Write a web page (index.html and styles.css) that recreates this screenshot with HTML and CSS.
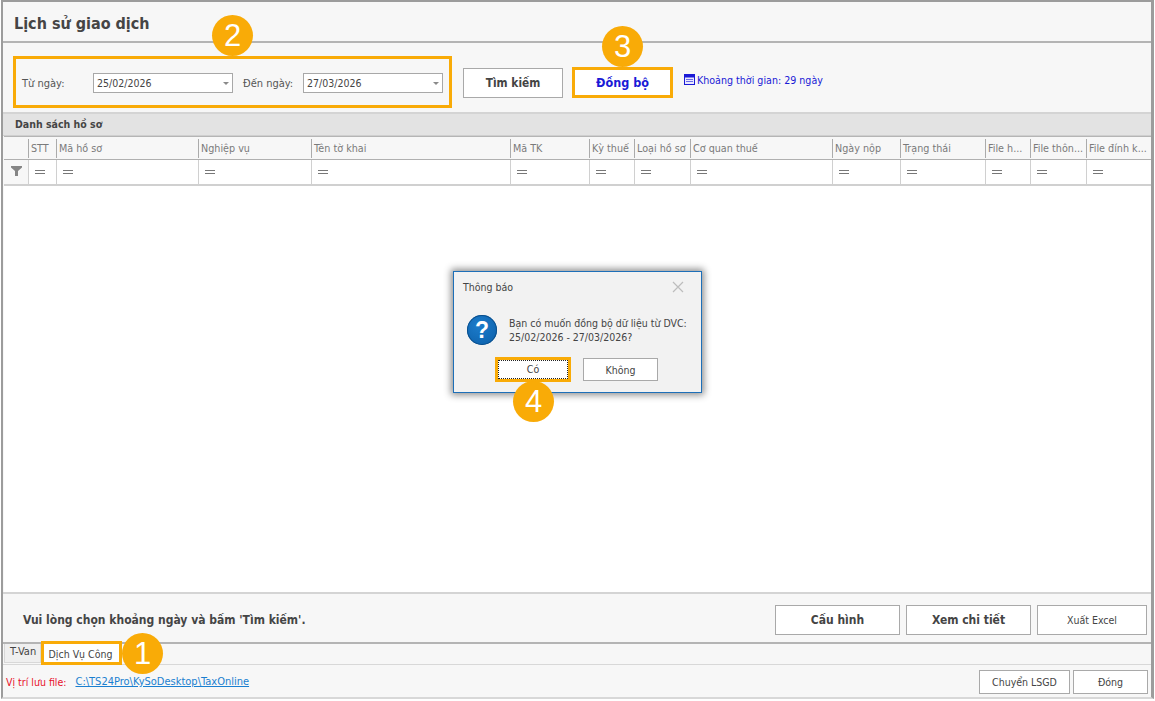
FILE: index.html
```html
<!DOCTYPE html>
<html lang="vi">
<head>
<meta charset="utf-8">
<title>Lịch sử giao dịch</title>
<link rel="stylesheet" href="styles.css">
</head>
<body>
<div class="window">
  <header class="title-bar"><h1 class="title">Lịch sử giao dịch</h1></header>
  <section class="toolbar">
    <div class="date-group">
      <label class="lbl lbl-from">Từ ngày:</label>
      <div class="date-input"><span>25/02/2026</span><i class="caret"></i></div>
      <label class="lbl lbl-to">Đến ngày:</label>
      <div class="date-input"><span>27/03/2026</span><i class="caret"></i></div>
    </div>
    <button class="btn btn-search">Tìm kiếm</button>
    <button class="btn btn-sync">Đồng bộ</button>
    <div class="range">
      <svg class="range-icon" width="11" height="11" viewBox="0 0 11 11"><rect x="0.5" y="0.5" width="10" height="10" fill="#e8e8ff" stroke="#1a1ad6"/><rect x="1" y="1" width="9" height="2.5" fill="#1a1ad6"/><path d="M2 5.5h7M2 7.5h7" stroke="#6a6ae8"/></svg>
      <span>Khoảng thời gian: 29 ngày</span>
    </div>
  </section>
  <div class="group-head">Danh sách hồ sơ</div>
  <div class="grid grid-head">
    <div class="hc hc-first"></div>
    <div class="hc">STT</div><div class="hc">Mã hồ sơ</div><div class="hc">Nghiệp vụ</div><div class="hc">Tên tờ khai</div>
    <div class="hc">Mã TK</div><div class="hc">Kỳ thuế</div><div class="hc">Loại hồ sơ</div><div class="hc">Cơ quan thuế</div>
    <div class="hc">Ngày nộp</div><div class="hc">Trạng thái</div><div class="hc">File h...</div><div class="hc">File thôn...</div><div class="hc">File đính k...</div>
  </div>
  <div class="grid grid-filter">
    <div class="fc fc-first"><svg width="11" height="10" viewBox="0 0 11 10"><path d="M0 0h11v1.6L7 5v5H4V5L0 1.6z" fill="#858585"/></svg></div>
    <div class="fc"><i class="eq"></i></div><div class="fc"><i class="eq"></i></div><div class="fc"><i class="eq"></i></div><div class="fc"><i class="eq"></i></div>
    <div class="fc"><i class="eq"></i></div><div class="fc"><i class="eq"></i></div><div class="fc"><i class="eq"></i></div><div class="fc"><i class="eq"></i></div>
    <div class="fc"><i class="eq"></i></div><div class="fc"><i class="eq"></i></div><div class="fc"><i class="eq"></i></div><div class="fc"><i class="eq"></i></div><div class="fc"><i class="eq"></i></div>
  </div>
  <div class="grid-body"></div>
  <section class="action-bar">
    <p class="hint">Vui lòng chọn khoảng ngày và bấm 'Tìm kiếm'.</p>
    <button class="btn btn-action btn-config">Cấu hình</button>
    <button class="btn btn-action btn-detail">Xem chi tiết</button>
    <button class="btn btn-excel">Xuất Excel</button>
  </section>
  <nav class="tabs">
    <div class="tab">T-Van</div>
    <div class="tab tab-active">Dịch Vụ Công</div>
  </nav>
  <footer class="footer">
    <span class="path-label">Vị trí lưu file:</span>
    <a class="path-link" href="#">C:\TS24Pro\KySoDesktop\TaxOnline</a>
    <button class="btn btn-foot btn-lsgd">Chuyển LSGD</button>
    <button class="btn btn-foot btn-close">Đóng</button>
  </footer>

  <div class="dialog">
    <div class="dlg-head"><span>Thông báo</span>
      <svg class="dlg-x" width="12" height="12" viewBox="0 0 12 12"><path d="M1 1l10 10M11 1L1 11" stroke="#bdbdbd" stroke-width="1.2" fill="none"/></svg>
    </div>
    <div class="dlg-body">
      <div class="q-icon">?</div>
      <p class="dlg-msg">Bạn có muốn đồng bộ dữ liệu từ DVC:<br>25/02/2026 - 27/03/2026?</p>
    </div>
    <div class="dlg-btns">
      <button class="dlg-btn dlg-yes"><span>Có</span></button>
      <button class="dlg-btn dlg-no">Không</button>
    </div>
  </div>

  <div class="mark mark-tab"></div>
  <div class="badge badge-1">1</div>
  <div class="badge badge-2">2</div>
  <div class="badge badge-3">3</div>
  <div class="badge badge-4">4</div>
</div>
</body>
</html>
```
FILE: styles.css
```css
* { box-sizing: border-box; }
html, body { margin: 0; padding: 0; background: #fff; }
body { width: 1155px; height: 701px; overflow: hidden; font-family: "DejaVu Sans Condensed", "DejaVu Sans", sans-serif; font-size: 10.5px; color: #444; }
.window { position: relative; margin-left: 1px; width: 1153px; height: 699px; border: solid #9c9c9c; border-width: 2px 3px 0 2px; display: flex; flex-direction: column; background: #f7f7f7; border-bottom: 2px solid #d8d8d8; }
button { font-family: inherit; padding: 0; margin: 0; cursor: default; }

.title-bar { height: 41px; flex: none; border-bottom: 2px solid #b4b4b4; display: flex; align-items: center; padding-left: 11px; }
.title { margin: 0; font-size: 16px; font-weight: 700; color: #454545; position: relative; top: 2px; }

.toolbar { height: 71px; flex: none; display: flex; align-items: center; padding: 8px 0 0 10px; border-bottom: 2px solid #d4d4d4; }
.date-group { width: 439px; height: 52px; border: 3px solid #f9ab07; display: flex; align-items: center; padding: 2px 0 0 6px; margin-top: 1px; }
.lbl { color: #555; font-size: 11px; }
.lbl-from { width: 71px; }
.lbl-to { width: 60px; margin-left: 10px; }
.date-input { width: 140px; height: 20px; border: 1px solid #a8a8a8; background: #fff; display: flex; align-items: center; padding-left: 3px; position: relative; color: #444; }
.caret { position: absolute; right: 3px; top: 8px; width: 0; height: 0; border: 3.5px solid transparent; border-top: 3px solid #8a8a8a; border-bottom: 0; }

.btn { background: #fff; border: 1px solid #a9a9a9; color: #444; }
.btn-search { width: 100px; height: 30px; margin: 3px 0 0 11px; font-size: 11.8px; font-weight: 700; }
.btn-sync { width: 101px; height: 31px; margin: 2px 0 0 9px; border: 3px solid #f9ab07; font-size: 12.5px; font-weight: 700; color: #1a1ad6; }
.range { display: flex; align-items: center; gap: 2px; margin: -4px 0 0 11px; color: #1a1ad6; font-size: 10.6px; }
.range-icon { flex: none; }

.group-head { height: 22px; flex: none; background: #e3e3e3; border-bottom: 1px solid #cfcfcf; padding: 0 0 2px 12px; font-weight: 700; font-size: 10.5px; color: #454545; display: flex; align-items: center; }

.grid { display: grid; grid-template-columns: 24px 28px 142px 113px 199px 79px 45px 56px 142px 68px 85px 45px 56px 64px; flex: none; background: #f7f7f7; margin-left: 1px; }
.grid-head { height: 24px; border-top: 1px solid #b5b5b5; border-bottom: 1px solid #b0b0b0; }
.hc { color: #7a7a7a; font-size: 10.7px; white-space: nowrap; overflow: hidden; padding: 2px 0 0 2px; border-left: 1px solid #ababab; margin: 2px 0 1px; line-height: 16px; }
.hc-first { border-left: 0; }
.grid-filter { height: 26px; background: #fff; border-bottom: 2px solid #d0d0d0; }
.fc { border-left: 1px solid #d0d0d0; display: flex; align-items: center; padding-left: 6px; }
.fc-first { border-left: 0; padding: 0 0 2px 7px; background: #f7f7f7; }
.eq { display: block; width: 10px; height: 4px; border-top: 1px solid #777; border-bottom: 1px solid #777; }

.grid-body { flex: 1; background: #fff; margin-left: 1px; }

.action-bar { height: 52px; flex: none; display: flex; align-items: center; padding: 4px 0 0 20px; border-top: 2px solid #d4d4d4; border-bottom: 2px solid #b4b4b4; }
.hint { margin: 0 auto 0 0; font-size: 12px; font-weight: 700; color: #454545; }
.btn-action { height: 30px; font-size: 12px; font-weight: 700; }
.btn-config { width: 125px; }
.btn-detail { width: 125px; margin-left: 6px; }
.btn-excel { width: 110px; height: 30px; margin: 0 4px 0 6px; font-size: 10.5px; }

.tabs { height: 21px; flex: none; display: flex; border-bottom: 1px solid #d8d8d8; padding-left: 1px; }
.tab { height: 19px; width: 37px; padding-left: 5px; background: #efefef; border: 1px solid #d8d8d8; border-top: 0; line-height: 16px; font-size: 11px; color: #444; }
.tab-active { width: 79px; height: 20px; background: #fff; margin-left: 1px; text-align: center; padding: 4px 2px 0 0; border: 0; font-size: 10.5px; line-height: normal; }

.footer { height: 32px; flex: none; display: flex; align-items: center; padding: 1px 3px 0 3px; }
.path-label { color: #e8102a; font-size: 10.5px; }
.path-link { color: #1a7fd0; margin-left: 9px; text-decoration: underline; font-size: 11px; }
.btn-foot { height: 24px; font-size: 10.5px; }
.btn-lsgd { width: 91px; margin-left: auto; }
.btn-close { width: 75px; margin-left: 3px; }

.dialog { position: absolute; left: 450px; top: 269px; width: 249px; height: 122px; background: #f2f2f2; border: 1px solid #1d6fb8; box-shadow: 0 0 7px 2px rgba(0,0,0,.45); display: flex; flex-direction: column; }
.dlg-head { height: 29px; flex: none; display: flex; align-items: center; padding: 0 17px 0 9px; justify-content: space-between; color: #444; }
.dlg-body { flex: none; height: 55px; display: flex; align-items: center; padding: 3px 0 0 13px; }
.q-icon { width: 30px; height: 30px; border-radius: 50%; background: radial-gradient(circle at 40% 35%, #1c7ccb, #0b5ea8); box-shadow: inset 0 0 0 1px #0b4f8c; color: #fff; font-family: "Liberation Sans", sans-serif; font-weight: 700; font-size: 23px; line-height: 30px; text-align: center; flex: none; }
.dlg-msg { margin: 0 0 0 12px; font-size: 10.5px; line-height: 14px; color: #444; }
.dlg-btns { display: flex; padding: 2px 0 0 41px; }
.dlg-btn { background: #fff; border: 1px solid #a9a9a9; color: #444; font-size: 10.5px; height: 23px; }
.dlg-yes { width: 76px; height: 25px; border: 3px solid #f9ab07; padding: 0; margin-top: -1px; }
.dlg-yes span { display: block; height: 100%; line-height: 17px; border: 1px dotted #222; }
.dlg-no { width: 75px; margin-left: 12px; }

.mark { position: absolute; border: 3px solid #f9ab07; pointer-events: none; }
.mark-tab { left: 38px; top: 639px; width: 81px; height: 24px; }
.badge { position: absolute; width: 41px; height: 41px; border-radius: 50%; background: #f9ab07; color: #fff; font-family: "Liberation Sans", sans-serif; font-size: 31px; line-height: 41px; text-align: center; }
.badge-1 { left: 119px; top: 631px; }
.badge-2 { left: 209px; top: 13px; }
.badge-3 { left: 599px; top: 24px; }
.badge-4 { left: 510px; top: 379px; }
```
